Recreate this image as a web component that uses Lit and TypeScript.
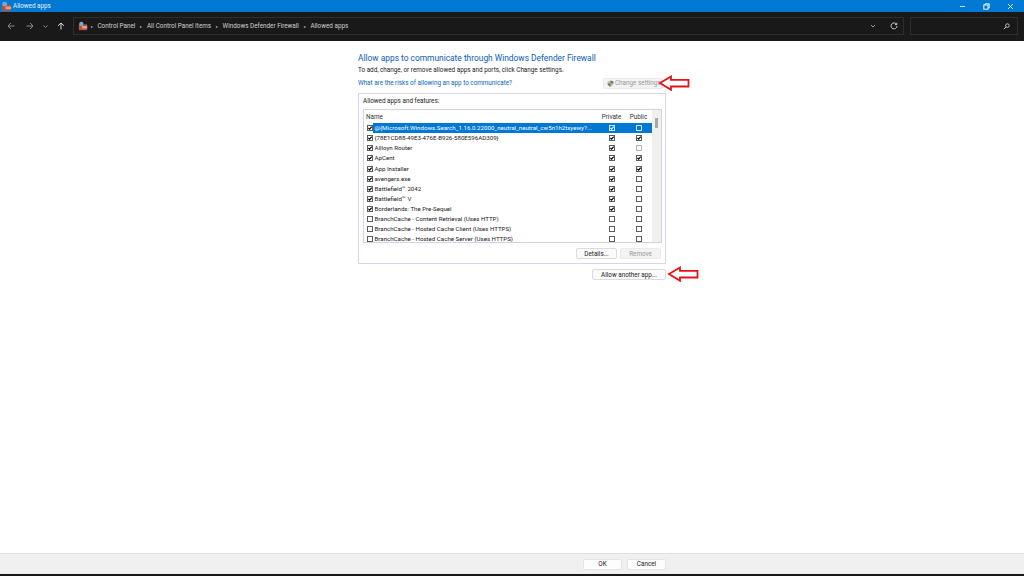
import { LitElement, css, html, svg, type TemplateResult } from "lit";
import { customElement } from "lit/decorators.js";

type Row = { name: string; on: boolean; priv: boolean; pub: boolean; faint?: boolean };

const ROWS: Row[] = [
  { name: "@{Microsoft.Windows.Search_1.16.0.22000_neutral_neutral_cw5n1h2txyewy?...", on: true, priv: true, pub: false },
  { name: "{78E1CD88-49E3-476E-B926-580E596AD309}", on: true, priv: true, pub: true },
  { name: "Allloyn Router", on: true, priv: true, pub: false, faint: true },
  { name: "ApCent", on: true, priv: true, pub: true },
  { name: "App Installer", on: true, priv: true, pub: true },
  { name: "avengers.exe", on: true, priv: true, pub: false },
  { name: "Battlefield™ 2042", on: true, priv: true, pub: false },
  { name: "Battlefield™ V", on: true, priv: true, pub: false },
  { name: "Borderlands: The Pre-Sequel", on: true, priv: true, pub: false },
  { name: "BranchCache - Content Retrieval (Uses HTTP)", on: false, priv: false, pub: false },
  { name: "BranchCache - Hosted Cache Client (Uses HTTPS)", on: false, priv: false, pub: false },
  { name: "BranchCache - Hosted Cache Server (Uses HTTPS)", on: false, priv: false, pub: false },
];

const CRUMBS = ["Control Panel", "All Control Panel Items", "Windows Defender Firewall", "Allowed apps"];

const folderIcon = (size: number) => html`<svg width=${size} height=${size} viewBox="0 0 12 12">
  <rect x="1" y="4" width="10" height="7" fill="#b5523a"></rect>
  <rect x="5" y="6" width="6" height="3" fill="#d9a58c"></rect>
  <circle cx="4" cy="3.5" r="2.6" fill="#7ea6c9"></circle>
</svg>`;

const redArrow = svg`<path d="M2 8 L13 1.5 V4.8 H30.5 V11.5 H13 V14.8 Z" fill="#fff" stroke="#e3131b" stroke-width="1.8" stroke-linejoin="miter"></path>`;

@customElement("app-root")
export class AppRoot extends LitElement {
  static override styles = css`
    :host {
      display: flex;
      flex-direction: column;
      width: 1024px;
      height: 576px;
      overflow: hidden;
      position: relative;
      background: #fff;
      font-family: Roboto, "Open Sans", sans-serif;
      font-size: 6.33px;
      color: #1a1a1a;
    }
    .title {
      height: 12px;
      background: #0078d4;
      display: flex;
      align-items: center;
      padding: 0 2px 0 1px;
      gap: 1px;
      color: #e6f2fb;
    }
    .title .grow { flex: 1; }
    .wbtn { width: 24px; display: flex; justify-content: center; margin-left: -1px; }
    .nav {
      height: 29px;
      background: #191919;
      display: flex;
      align-items: center;
      color: #d0d0d0;
      box-sizing: border-box;
      padding: 0 0 1px 0;
      flex: none;
    }
    .navbtns { width: 73px; display: flex; flex: none; padding-left: 7px; box-sizing: border-box; gap: 8px; align-items: center; }
    .navbtns .fwd { margin-left: 3px; }
    .addr {
      width: 831px;
      height: 18px;
      box-sizing: border-box;
      border: 1px solid #2e2e2e;
      display: flex;
      align-items: center;
      padding-left: 4px;
      gap: 4.75px;
    }
    .addr > svg:first-child { margin-right: -2px; }
    .addr .sep { color: #bbb; font-size: 4px; }
    .addr .grow { flex: 1; }
    .addr .chev { margin-right: 9px; }
    .addr .refresh { margin-right: 5px; }
    .search {
      width: 108px;
      height: 18px;
      margin-left: 6px;
      box-sizing: border-box;
      border: 1px solid #2e2e2e;
      display: flex;
      justify-content: flex-end;
      align-items: center;
      padding-right: 7px;
    }
    .main { flex: 1; display: flex; flex-direction: column; padding: 12px 0 0 358px; }
    .col { width: 308px; display: flex; flex-direction: column; }
    h1 { font-size: 8.4px; font-weight: 400; color: #0b5bb5; margin: 0; line-height: 10px; }
    .sub { margin-top: 2px; line-height: 10px; height: 10px; }
    .linkrow { display: flex; justify-content: space-between; align-items: center; margin-top: 2px; height: 12px; }
    .link { color: #0a66c2; }
    .change {
      width: 60px;
      height: 11px;
      margin-right: 3px;
      background: #f3f3f3;
      border: 1px solid #ebebeb;
      border-radius: 2px;
      box-sizing: border-box;
      display: flex;
      align-items: center;
      padding-left: 3px;
      gap: 1px;
      color: #9a9a9a;
      white-space: nowrap;
    }
    .group {
      margin-top: 4px;
      height: 171px;
      box-sizing: border-box;
      border: 1px solid #d5d5ec;
      padding: 3px 3px 0 4px;
      display: flex;
      flex-direction: column;
    }
    .grouplabel { line-height: 9px; height: 12px; flex: none; }
    .list {
      height: 134px;
      flex: none;
      box-sizing: border-box;
      border: 1px solid #cfd2ea;
      display: flex;
      overflow: hidden;
    }
    .table { width: 288px; flex: none; }
    .head { display: flex; height: 13px; align-items: center; color: #333; }
    .head .n { flex: 1; padding-left: 2px; }
    .c1, .c2 { flex: none; width: 27px; text-align: center; display: flex; justify-content: center; }
    .row { display: flex; height: 10.13px; align-items: center; white-space: nowrap; }
    .row .n { flex: 1; min-width: 0; display: flex; align-items: center; height: 100%; padding-left: 3px; }
    .row .txt { flex: 1; font-size: 6.15px; line-height: 10px; padding-left: 0.5px; height: 100%; }
    .row.sel { background: linear-gradient(to right, transparent 9.5px, #0078d4 9.5px); }
    .row.sel .txt { color: #fff; }
    .box {
      width: 6px;
      height: 6px;
      box-sizing: border-box;
      border: 1px solid #5c5c5c;
      background: #fff;
      color: #000;
      flex: none;
      margin-right: 1px;
      display: block;
    }
    .box svg { display: block; }
    .box path { fill: none; stroke: currentColor; stroke-width: 1.1; }
    .c1 .box, .c2 .box { margin-right: 0; }
    .box.faint { border-color: #b5b5b5; }
    .sel .c1 .box, .sel .c2 .box { background: #0078d4; border-color: #cfe6f8; color: #e6f2fb; }
    .track { flex: 1; background: #f0f0f0; display: flex; justify-content: center; padding-top: 8px; }
    .thumb { width: 2.5px; height: 10px; background: #a8a8a8; }
    .actions { display: flex; justify-content: flex-end; gap: 3px; margin-top: 5px; padding-right: 1px; }
    .btn {
      height: 11px;
      box-sizing: border-box;
      border: 1px solid #dcdcdc;
      border-radius: 2px;
      background: #fbfbfb;
      display: flex;
      align-items: center;
      justify-content: center;
      color: #222;
    }
    .btn.off { background: #f3f3f3; color: #9a9a9a; border-color: #ebebeb; }
    .details, .remove { width: 41px; }
    .another { width: 74px; margin: 5px 0 0 auto; }
    .footer {
      height: 21px;
      box-sizing: border-box;
      background: #f0f0f0;
      border-top: 1px solid #dfdfdf;
      display: flex;
      justify-content: flex-end;
      align-items: center;
      gap: 5px;
      padding-right: 358px;
      flex: none;
    }
    .footer .btn { width: 39px; background: #fdfdfd; border-color: #e4e4e4; }
    .strip { height: 2px; background: #191919; flex: none; }
    .arrow { position: absolute; }
    .a1 { left: 658px; top: 75px; }
    .a2 { left: 667px; top: 266px; }
  `;

  private box(checked: boolean, faint = false): TemplateResult {
    return html`<span class="box ${faint ? "faint" : ""}">${checked
      ? html`<svg width="4" height="4" viewBox="0 0 4 4"><path d="M.4 2 L1.6 3.2 L3.7 .7"></path></svg>`
      : ""}</span>`;
  }

  override render(): TemplateResult {
    return html`
      <div class="title">
        ${folderIcon(11)}<span>Allowed apps</span><span class="grow"></span>
        <span class="wbtn"><svg width="7" height="7" viewBox="0 0 7 7"><path d="M1 3.5H6" stroke="#cfe6f8"></path></svg></span>
        <span class="wbtn"><svg width="7" height="7" viewBox="0 0 7 7" fill="none" stroke="#e6f2fb"><rect x=".8" y="2" width="4.2" height="4.2"></rect><path d="M2 2V.8H6.2V5H5"></path></svg></span>
        <span class="wbtn"><svg width="7" height="7" viewBox="0 0 7 7"><path d="M1 1L6 6M6 1L1 6" stroke="#cfe6f8"></path></svg></span>
      </div>
      <div class="nav">
        <div class="navbtns">
          <svg width="8" height="8" viewBox="0 0 8 8" fill="none" stroke="#8a8a8a"><path d="M7.5 4H1M3.8 1L1 4L3.8 7"></path></svg>
          <svg class="fwd" width="8" height="8" viewBox="0 0 8 8" fill="none" stroke="#8a8a8a"><path d="M.5 4H7M4.2 1L7 4L4.2 7"></path></svg>
          <svg width="7" height="7" viewBox="0 0 7 7" fill="none" stroke="#8a8a8a"><path d="M1.5 2.5L3.5 4.5L5.5 2.5"></path></svg>
          <svg width="8" height="8" viewBox="0 0 8 8" fill="none" stroke="#d8d8d8"><path d="M4 7.5V1M1 3.8L4 1L7 3.8"></path></svg>
        </div>
        <div class="addr">
          ${folderIcon(10)}
          ${CRUMBS.map((c) => html`<span class="sep">▸</span><span>${c}</span>`)}
          <span class="grow"></span>
          <svg class="chev" width="6" height="6" viewBox="0 0 6 6" fill="none" stroke="#9a9a9a"><path d="M1 2L3 4L5 2"></path></svg>
          <svg class="refresh" width="8" height="8" viewBox="0 0 8 8" fill="none" stroke="#c8c8c8"><path d="M6.6 2.4A3 3 0 1 0 7 4M6.8 .8V2.6H5"></path></svg>
        </div>
        <div class="search">
          <svg width="7" height="7" viewBox="0 0 7 7" fill="none" stroke="#bdbdbd"><circle cx="4.4" cy="2.6" r="1.8"></circle><path d="M3 4L.8 6.2"></path></svg>
        </div>
      </div>
      <div class="main">
        <div class="col">
          <h1>Allow apps to communicate through Windows Defender Firewall</h1>
          <div class="sub">To add, change, or remove allowed apps and ports, click Change settings.</div>
          <div class="linkrow">
            <span class="link">What are the risks of allowing an app to communicate?</span>
            <span class="change">
              <svg width="7" height="7" viewBox="0 0 8 8"><path d="M4 .5L7.3 1.6V4C7.3 6 5.6 7.2 4 7.7C2.4 7.2.7 6 .7 4V1.6Z" fill="#e8c04a"></path><path d="M4 .5L7.3 1.6V4H4ZM4 4V7.7C2.4 7.2.7 6 .7 4Z" fill="#3f7fd0"></path></svg>
              Change settings
            </span>
          </div>
          <div class="group">
            <div class="grouplabel">Allowed apps and features:</div>
            <div class="list">
              <div class="table">
                <div class="head">
                  <span class="n">Name</span><span class="c1">Private</span><span class="c2">Public</span>
                </div>
                ${ROWS.map(
                  (r, i) => html`<div class="row ${i === 0 ? "sel" : ""}">
                    <span class="n">${this.box(r.on)}<span class="txt">${r.name}</span></span>
                    <span class="c1">${this.box(r.priv)}</span>
                    <span class="c2">${this.box(r.pub, r.faint)}</span>
                  </div>`
                )}
              </div>
              <div class="track"><div class="thumb"></div></div>
            </div>
            <div class="actions">
              <div class="btn details">Details...</div>
              <div class="btn off remove">Remove</div>
            </div>
          </div>
          <div class="btn another">Allow another app...</div>
        </div>
      </div>
      <div class="footer">
        <div class="btn">OK</div>
        <div class="btn">Cancel</div>
      </div>
      <div class="strip"></div>
      <svg class="arrow a1" width="32" height="16" viewBox="0 0 32 16">${redArrow}</svg>
      <svg class="arrow a2" width="32" height="16" viewBox="0 0 32 16">${redArrow}</svg>
    `;
  }
}

declare global {
  interface HTMLElementTagNameMap {
    "app-root": AppRoot;
  }
}
